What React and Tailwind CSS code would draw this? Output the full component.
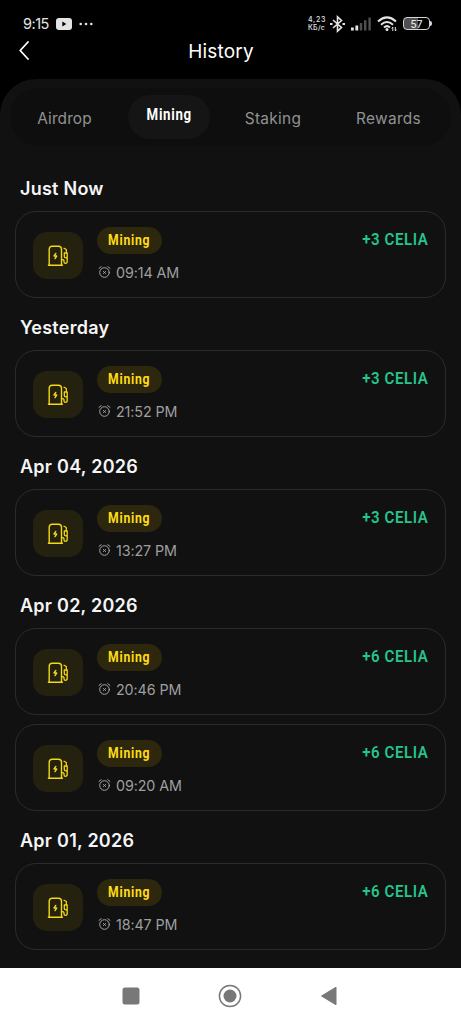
import { useState } from "react";

const tabs = [
  { name: "Airdrop", width: "w-[109px]", text: "tracking-[0.15px]" },
  { name: "Mining", width: "w-[100px]", text: "" },
  { name: "Staking", width: "w-[108px]", text: "tracking-[0.3px]" },
  { name: "Rewards", width: "w-[123px]", text: "tracking-[0.35px]" },
];

const history = [
  { date: "Just Now", items: [{ time: "09:14 AM", amount: "+3 CELIA" }] },
  { date: "Yesterday", items: [{ time: "21:52 PM", amount: "+3 CELIA" }] },
  { date: "Apr 04, 2026", items: [{ time: "13:27 PM", amount: "+3 CELIA" }] },
  {
    date: "Apr 02, 2026",
    items: [
      { time: "20:46 PM", amount: "+6 CELIA" },
      { time: "09:20 AM", amount: "+6 CELIA" },
    ],
  },
  { date: "Apr 01, 2026", items: [{ time: "18:47 PM", amount: "+6 CELIA" }] },
];

function StationIcon() {
  return (
    <svg width="22" height="22" viewBox="0 0 22 22" fill="none" stroke="#f2d818" strokeWidth="1.4" strokeLinecap="round" strokeLinejoin="round">
      <path d="M2.2 20V4.2Q2.2 1.2 5.2 1.2H11.5Q14.5 1.2 14.5 4.2V20M1.4 20.3H15.4" />
      <path d="M8.8 8.4 7 11H9.7L8 13.6" />
      <path d="M17 3.2 19.3 4.5V7.2M17.3 8H20.2V11.5Q20.2 12.8 18.8 12.8Q17.3 12.8 17.3 11.5V8M20.2 11V16.3Q20.2 18.3 18.5 18.3Q17 18.3 17 16.7V15.5Q17 14.7 14.7 14.7" strokeWidth="1.3" />
    </svg>
  );
}

function AlarmIcon() {
  return (
    <svg width="13" height="14" viewBox="0 0 13 14" fill="none" stroke="#a5a5a5" strokeWidth="1" strokeLinecap="round">
      <circle cx="6.5" cy="6.5" r="4.8" />
      <path d="M1 2.4 3.2 .7M12 2.4 9.8 .7M5.4 5.5 7.6 7.5M7.6 5.5 5.4 7.5" />
    </svg>
  );
}

function StatusBar() {
  return (
    <div className="flex h-[38px] items-center justify-between pt-[9px] pl-[23px] pr-[29px] text-[#e4e4e4]">
      <div className="flex items-center">
        <span className="w-[33px] text-[14.5px] leading-4 tracking-[-0.5px]">9:15</span>
        <svg width="16" height="12" viewBox="0 0 16 12">
          <rect width="16" height="12" rx="3" fill="#e4e4e4" />
          <path d="M6.3 3.6V8.4L10.3 6Z" fill="#000" />
        </svg>
        <svg className="ml-[7px]" width="14" height="4" viewBox="0 0 14 4" fill="#e4e4e4">
          <circle cx="1.7" cy="2" r="1.3" />
          <circle cx="7" cy="2" r="1.3" />
          <circle cx="12.3" cy="2" r="1.3" />
        </svg>
      </div>
      <div className="flex items-center">
        <div className="w-[22px] text-[7px] leading-[7.5px] font-medium">
          <div className="tracking-[0.7px]">4,23</div>
          <div className="tracking-[0.3px]">КБ/с</div>
        </div>
        <svg width="15" height="18" viewBox="0 0 15 18" fill="none" stroke="#e4e4e4" strokeWidth="1.6">
          <path d="M3 5 11.5 12.5 7.5 16.2V1.8L11.5 5.5 3 13" />
          <path d="M0 9H2.5M12.5 9H15" strokeWidth="2" />
        </svg>
        <svg className="ml-[6px]" width="21" height="14" viewBox="0 0 21 14">
          <path d="M0 10.5H2.8V13.5H0ZM4.4 8.5H7.2V13.5H4.4Z" fill="#e4e4e4" />
          <path d="M8.8 6H11.2V13.5H8.8ZM13 3.2H15.4V13.5H13ZM17.4 .5H19.8V13.5H17.4Z" fill="#505050" />
        </svg>
        <svg className="ml-[5px]" width="20" height="16" viewBox="0 0 20 16" fill="none" stroke="#e4e4e4" strokeWidth="2">
          <path d="M1 5.4Q10-2.6 19 5.4M4 8.7Q10 3.3 16 8.7M7 11.5Q10 8.8 13 11.5" />
          <circle cx="10" cy="13.5" r="1.5" fill="#e4e4e4" stroke="none" />
          <path d="M15.8 11V15M18.3 11V15M14.6 12.4 15.8 11M19.5 13.6 18.3 15" strokeWidth="1" />
        </svg>
        <div className="ml-[6px] flex h-[13px] w-[27px] items-center justify-center rounded-[4px] border-[1.5px] border-[#d5d5d5] bg-linear-to-r from-[#505050] from-55% to-black to-55% text-[10px] leading-none font-medium">
          57
        </div>
        <div className="h-[5px] w-[2px] rounded-r-sm bg-[#d5d5d5]" />
      </div>
    </div>
  );
}

function HistoryCard({ item }) {
  return (
    <div className="flex h-[87px] rounded-[21px] border border-[#2b2b2b] pt-[15px] px-[17px]">
      <div className="mt-[5px] flex h-[47px] w-[50px] items-center justify-center rounded-[14px] bg-[#24210f]">
        <StationIcon />
      </div>
      <div className="ml-[14px]">
        <div className="flex h-[27px] w-[65px] items-center justify-center rounded-full bg-[#2d270d] font-['Roboto'] text-[14.5px] font-bold tracking-[0.9px] text-[#ffdc16]">
          <span className="inline-block scale-x-[0.84]">Mining</span>
        </div>
        <div className="mt-[10px] flex items-center pl-px">
          <AlarmIcon />
          <span className="ml-[5px] text-[14.3px] leading-[18px] tracking-[-0.1px] whitespace-nowrap text-[#9f9f9f]">
            {item.time}
          </span>
        </div>
      </div>
      <span className="mt-[4px] ml-auto origin-right scale-x-[0.94] font-['Roboto'] text-[16px] leading-[18px] font-semibold tracking-[0.6px] whitespace-nowrap text-[#25c58b]">
        {item.amount}
      </span>
    </div>
  );
}

export default function App() {
  const [activeTab, setActiveTab] = useState("Mining");

  return (
    <div className="flex h-[1024px] w-[461px] flex-col overflow-hidden bg-black font-['Inter',sans-serif]">
      <StatusBar />

      {/* Header */}
      <div className="grid h-[41px] grid-cols-[60px_1fr_80px]">
        <button className="flex items-start pt-[3px] pl-[19px]">
          <svg width="10" height="19" viewBox="0 0 10 19" fill="none" stroke="#fff" strokeWidth="1.8" strokeLinecap="round" strokeLinejoin="round">
            <path d="M9 1 1.2 9.5 9 18" />
          </svg>
        </button>
        <h1 className="pl-px text-center text-[19px] leading-[27px] tracking-[0.2px] text-white">History</h1>
      </div>

      <div className="flex-1 rounded-t-[36px] bg-[#111111] px-[10px] pt-[9px]">
        {/* Tabs */}
        <div className="flex h-[58px] items-center rounded-[29px] bg-[#0e0e0e]">
          {tabs.map((tab) => (
            <button
              key={tab.name}
              onClick={() => setActiveTab(tab.name)}
              className={`${tab.width} ${tab.text} ${
                activeTab === tab.name
                  ? "px-[9px] font-['Roboto'] text-[16px] font-bold tracking-[0.8px] text-white"
                  : "pt-[3px] text-[15.4px] text-[#929292]"
              }`}
            >
              {activeTab === tab.name ? (
                <span className="flex h-[44px] items-center justify-center rounded-full bg-[#151515] pb-[5px]">
                  <span className="inline-block scale-x-[0.83]">{tab.name}</span>
                </span>
              ) : (
                tab.name
              )}
            </button>
          ))}
        </div>

        {/* History list */}
        <div className="flex flex-col gap-[15px] px-[5px] pt-[28px]">
          {history.map((group) => (
            <section key={group.date}>
              <h2 className="h-[28px] pt-px pl-[5px] text-[18px] leading-[28px] font-semibold tracking-[0.25px] text-[#f5f5f5]">
                {group.date}
              </h2>
              <div className="mt-[9px] flex flex-col gap-[9px]">
                {group.items.map((item) => (
                  <HistoryCard key={item.time} item={item} />
                ))}
              </div>
            </section>
          ))}
        </div>
      </div>

      {/* Navigation bar */}
      <div className="flex h-[56px] shrink-0 items-center justify-center bg-white pr-[2px]">
        <svg width="18" height="18" viewBox="0 0 18 18">
          <rect x=".5" y=".5" width="17" height="17" rx="2.5" fill="#787878" />
        </svg>
        <svg className="mx-[78px]" width="24" height="24" viewBox="0 0 24 24">
          <circle cx="12" cy="12" r="10.6" fill="none" stroke="#787878" strokeWidth="1.5" />
          <circle cx="12" cy="12" r="6.5" fill="#787878" />
        </svg>
        <svg width="18" height="20" viewBox="0 0 18 20">
          <path d="M16 1.2V18.8L1.5 10Z" fill="#787878" stroke="#787878" strokeLinejoin="round" />
        </svg>
      </div>
    </div>
  );
}
